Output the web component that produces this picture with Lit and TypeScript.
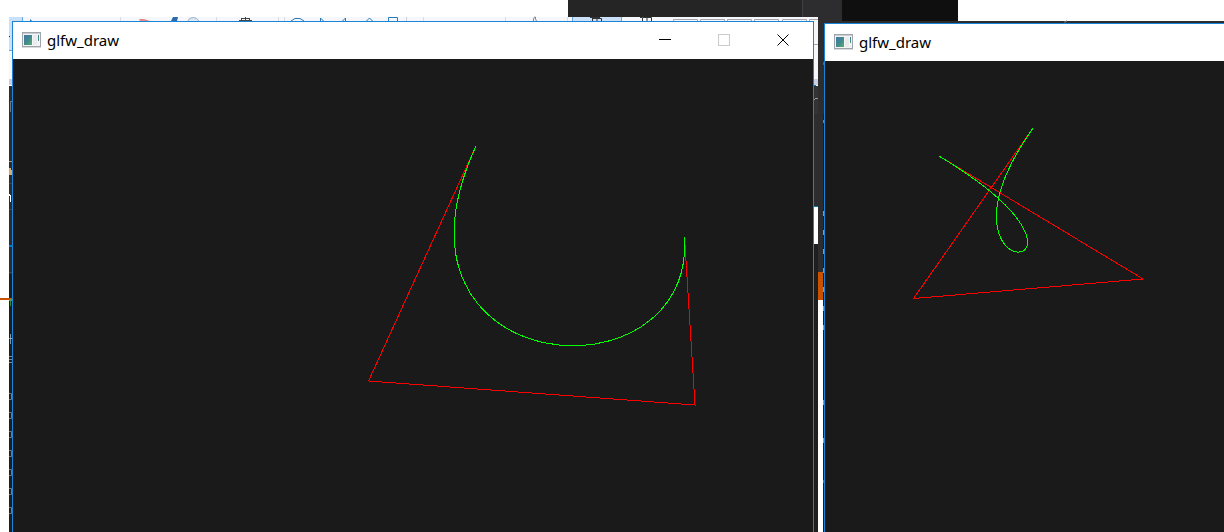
import { LitElement, html, css, svg } from "lit";
import { customElement, property } from "lit/decorators.js";

type Rect = [number, number, number, number, string];

/* Slivers of the applications lying under the two windows: x, y, w, h, fill */
const BACKDROP: Rect[] = [
  [568, 0, 234, 17, "#252526"],
  [802, 0, 1, 17, "#3f3f46"],
  [803, 0, 39, 21, "#2d2d30"],
  [842, 0, 116, 21, "#0f0f0f"],
  [818, 17, 24, 6, "#2d2d30"],
  [818, 21, 1100, 2, "#2d2d30"],
  [9, 17, 809, 62, "#f5f7fa"],
  [9, 17, 14, 34, "#c9e0f7"],
  [22, 17, 1, 5, "#66a7e8"],
  [9, 50, 4, 1, "#66a7e8"],
  [9, 36, 1, 1, "#222"],
  [120, 17, 1, 4, "#dadbdc"],
  [216, 17, 1, 4, "#dadbdc"],
  [278, 17, 1, 4, "#dadbdc"],
  [284, 17, 1, 4, "#dadbdc"],
  [406, 17, 1, 4, "#d0d1d2"],
  [423, 17, 1, 4, "#dadbdc"],
  [505, 17, 1, 4, "#dadbdc"],
  [567, 17, 1, 4, "#dadbdc"],
  [572, 17, 50, 4, "#c9e0f7"],
  [572, 17, 1, 4, "#66a7e8"],
  [621, 17, 1, 4, "#66a7e8"],
  [814, 44, 4, 1, "#a6a6b0"],
  [9, 79, 3, 6, "#c8cfe4"],
  [9, 85, 3, 1, "#ffffff"],
  [9, 86, 3, 446, "#2d2d30"],
  [10, 101, 2, 1, "#77777b"],
  [10, 101, 1, 11, "#77777b"],
  [9, 161, 3, 1, "#b99a63"],
  [9, 168, 2, 7, "#d9ab66"],
  [11, 170, 1, 5, "#d9ab66"],
  [9, 183, 3, 1, "#46464a"],
  [9, 194, 1, 2, "#ffffff"],
  [10, 195, 1, 7, "#ffffff"],
  [9, 209, 3, 1, "#46464a"],
  [9, 245, 3, 2, "#007acc"],
  [9, 272, 3, 1, "#46464a"],
  [9, 274, 3, 258, "#1e1e1e"],
  [0, 298, 12, 2, "#ca5100"],
  [9, 299, 3, 2, "#4ba04b"],
  [10, 301, 1, 5, "#2f8a36"],
  [10, 334, 1, 10, "#7f98a8"],
  [9, 338, 3, 1, "#b59a80"],
  [9, 356, 3, 1, "#88888c"],
  [9, 359, 3, 1, "#88888c"],
  [9, 362, 3, 1, "#88888c"],
  [814, 79, 4, 6, "#c8cfe4"],
  [814, 85, 2, 1, "#007acc"],
  [816, 85, 2, 1, "#ffffff"],
  [814, 86, 4, 28, "#333337"],
  [815, 98, 3, 1, "#99999b"],
  [814, 99, 1, 1, "#99999b"],
  [814, 114, 4, 92, "#2d2d30"],
  [814, 206, 4, 1, "#007acc"],
  [814, 207, 4, 37, "#ffffff"],
  [814, 244, 4, 288, "#1e1e1e"],
  [818, 23, 6, 249, "#2d2d30"],
  [818, 272, 5, 28, "#ca5100"],
  [823, 114, 1, 418, "#1e1e1e"],
  [823, 62, 1, 3, "#007acc"],
  [823, 120, 1, 3, "#4ba04b"],
  [823, 480, 1, 3, "#2f8a36"],
];

const LEFT_GLYPHS = [393, 412, 431, 450, 469, 488, 507];
const RIGHT_GLYPHS = [211, 230, 249, 268, 287, 306, 325, 400, 438];
const TOOL_FRAMES = [673, 700, 727, 754, 782, 809];

const rect = ([x, y, w, h, fill]: Rect) =>
  svg`<rect x=${x} y=${y} width=${w} height=${h} fill=${fill}></rect>`;

@customElement("gl-window")
export class GlWindow extends LitElement {
  @property() name = "";
  @property({ type: Boolean }) controls = false;
  @property() hull = "";
  @property() curve = "";

  static styles = css`
    :host {
      display: flex;
      flex-direction: column;
      box-sizing: border-box;
      border: 1px solid #1883d7;
      border-bottom: 0;
      background: #1a1a1a;
      overflow: hidden;
    }
    .title {
      display: flex;
      align-items: center;
      box-sizing: border-box;
      flex: none;
      height: 37px;
      padding: 0 1px 2px 9px;
      background: #fff;
      color: #000;
    }
    .name {
      flex: 1;
      margin: 0;
      padding-left: 6px;
      font: 400 15px/20px "Noto Sans", "Open Sans", sans-serif;
    }
    .buttons {
      display: flex;
      gap: 1px;
      height: 100%;
    }
    .button {
      display: flex;
      align-items: center;
      justify-content: center;
      width: 58px;
      padding: 0;
      border: 0;
      background: none;
      color: #000;
    }
    .button:disabled {
      color: #ccc;
    }
    .canvas {
      flex: 1;
      min-height: 0;
      width: 100%;
      display: block;
    }
  `;

  render() {
    return html`
      <header class="title">
        <svg width="19" height="16" aria-hidden="true">
          <defs>
            <linearGradient id="g" x1="0" y1="0" x2="1" y2="1">
              <stop offset="0" stop-color="#4377a4"></stop>
              <stop offset="0.55" stop-color="#438b8b"></stop>
              <stop offset="1" stop-color="#5dae6c"></stop>
            </linearGradient>
          </defs>
          <rect x="0.5" y="0.5" width="18" height="14" fill="#f4f4f4" stroke="#a0a5ab"></rect>
          <rect x="1" y="1" width="17" height="1" fill="#c9ccd0"></rect>
          <rect x="2" y="3" width="8" height="10" fill="url(#g)"></rect>
          <rect x="11" y="3" width="4" height="10" fill="#e9ebec"></rect>
          <rect x="16" y="3" width="1" height="6" fill="url(#g)"></rect>
          <rect x="0" y="15" width="19" height="1" fill="#d8dadc"></rect>
        </svg>
        <h1 class="name">${this.name}</h1>
        ${this.controls
          ? html`<div class="buttons">
              <button class="button" aria-label="Minimize">
                <svg width="12" height="12"><path d="M0 5.5H12" stroke="currentColor"></path></svg>
              </button>
              <button class="button" aria-label="Maximize" disabled>
                <svg width="12" height="12">
                  <rect x="0.5" y="0.5" width="11" height="11" fill="none" stroke="currentColor"></rect>
                </svg>
              </button>
              <button class="button" aria-label="Close">
                <svg width="12" height="12">
                  <path d="M0.5 0.5L11.5 11.5M11.5 0.5L0.5 11.5" stroke="currentColor"></path>
                </svg>
              </button>
            </div>`
          : ""}
      </header>
      <svg class="canvas" shape-rendering="crispEdges" fill="none" role="img" aria-label="Bézier curve">
        <path d=${this.hull} stroke="#f00"></path>
        <path d=${this.curve} stroke="#0f0"></path>
      </svg>
    `;
  }
}

@customElement("app-root")
export class AppRoot extends LitElement {
  static styles = css`
    :host {
      display: block;
      position: relative;
      height: 100vh;
      overflow: hidden;
      background: #fff;
    }
    .backdrop {
      display: block;
      width: 100%;
      height: 100%;
    }
    .window {
      position: absolute;
      bottom: 0;
    }
    .first {
      left: 12px;
      top: 21px;
      width: 802px;
    }
    .second {
      left: 824px;
      top: 23px;
      width: 802px;
    }
  `;

  render() {
    return html`
      <svg class="backdrop" aria-hidden="true">
        ${BACKDROP.map(rect)}
        <rect x="818" y="300" width="5" height="232" fill="#fff"></rect>
        ${LEFT_GLYPHS.map(
          (y) => svg`<path d="M9 ${y + 0.5}h2.5v6H9" fill="none" stroke="#77777a"></path>`,
        )}
        ${RIGHT_GLYPHS.map((y) => rect([823, y, 1, 5, "#8a9aa0"]))}
        ${TOOL_FRAMES.map(
          (x) => svg`<path d="M${x + 0.5} 22V19.5h24V22" fill="none" stroke="#a6a6aa"></path>`,
        )}
        <rect x="818" y="17" width="24" height="6" fill="#2d2d30"></rect>
        <path d="M30 19l2 2h-2z" fill="#1b6db5"></path>
        <path d="M139 19l5 0l6 2h-10z" fill="#e58a8a"></path>
        <path d="M173 17h5l-1 4h-6z" fill="#2a6cae"></path>
        <g fill="none" stroke="#9fb2c6"><path d="M188 21q1-3.500 5-3.500t6 3.500" fill="#dce8f3"></path></g>
        <path d="M241 18.500h9M239 20.500h13M245.500 17v4M241.500 18v3M249.500 18v3" stroke="#444" fill="none"></path>
        <g fill="none" stroke="#2b7ab8">
          <path d="M291 21l4-2.500h5l4 2.500"></path>
          <path d="M320.500 22v-4l3 3M345.500 22v-4l-3 3M366 21.500l3.500-3.500l3.500 3.500M388.500 22v-4.500h9V22"></path>
        </g>
        <path d="M533.500 21v-2l1-2h1v2l1 2" stroke="#888" fill="none"></path>
        <path
          d="M590 17.500h10M592.500 22v-4.500M592.500 18.500h9V22M597 18v4M640 17.500h2M642.500 22v-4.500h9V22M647 18v4"
          stroke="#333" fill="none"></path>
        <path d="M1064 22h2v-1h1" stroke="#77777a" fill="none"></path>
      </svg>
      <gl-window
        class="window first"
        name="glfw_draw"
        controls
        hull="M463 87L355.500 322L682 346L671.500 178"
        curve="M463 87C355.500 322 682 346 671.500 178"
      ></gl-window>
      <gl-window
        class="window second"
        name="glfw_draw"
        hull="M114 95L318 218L88.500 237.500L208 67"
        curve="M114 95C318 218 88.500 237.500 208 67"
      ></gl-window>
    `;
  }
}
